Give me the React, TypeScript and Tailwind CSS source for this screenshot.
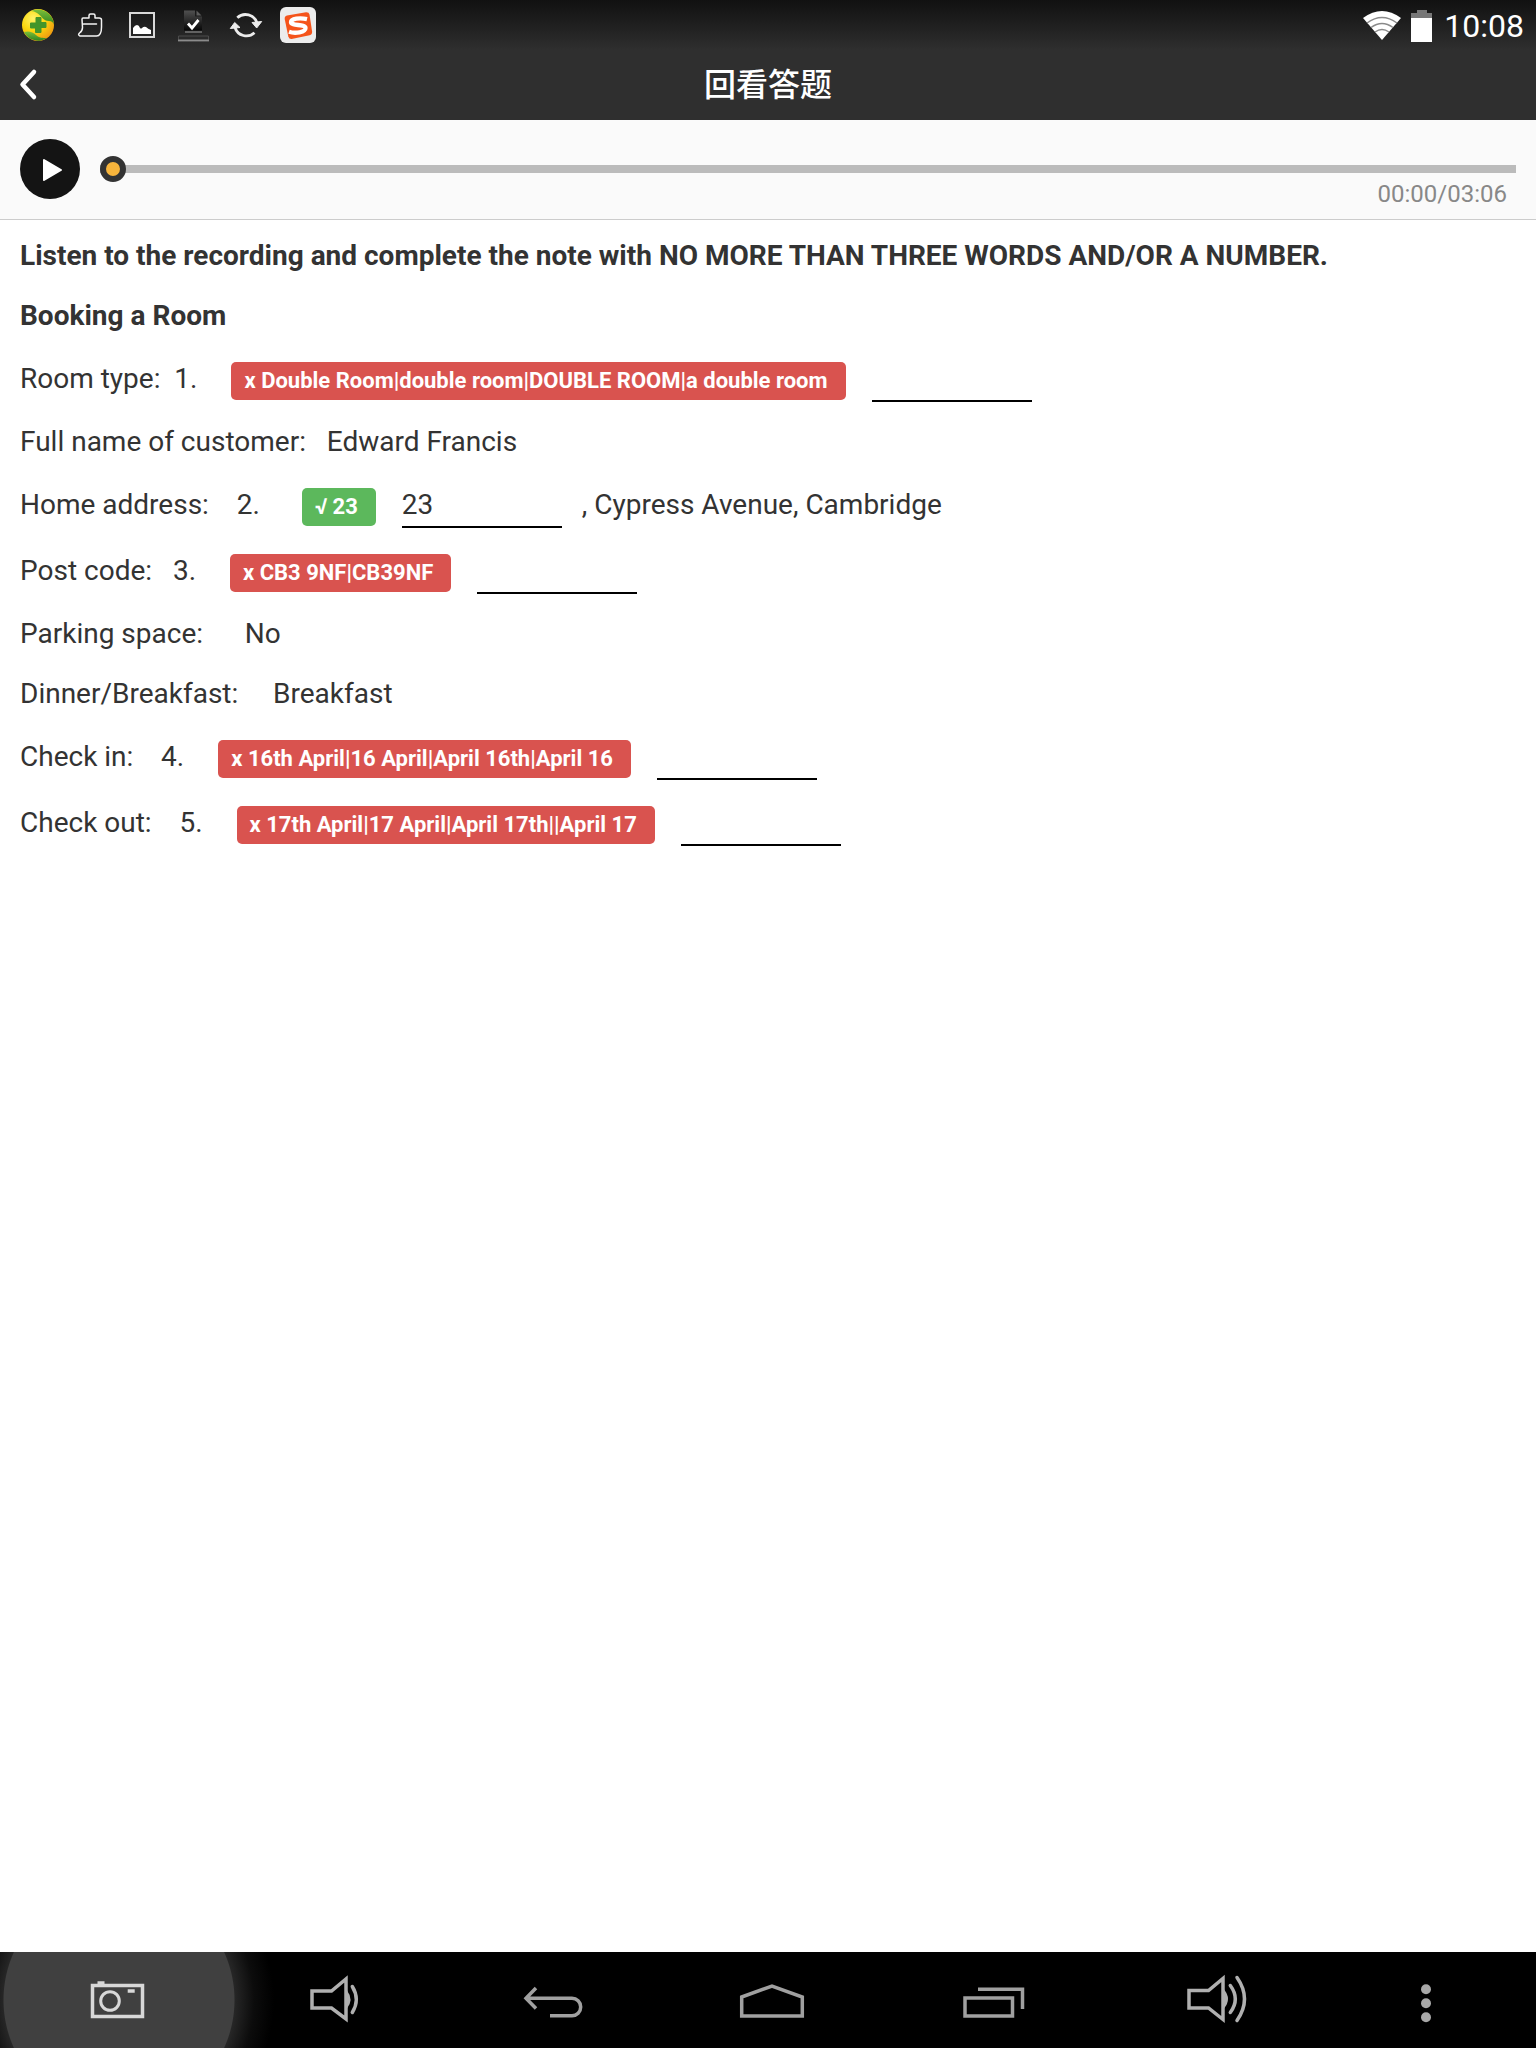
import React, { useState } from "react";

function StatusBar() {
  return (
    <div className="flex h-[50px] items-start justify-between bg-linear-to-b from-[#111111] to-[#2f2f2f] pl-[20px] pr-3">
      <div className="flex h-[50px] items-center gap-4">
        <svg className="size-9" viewBox="0 0 36 36">
          <defs>
            <radialGradient id="ball" cx="35%" cy="30%" r="75%">
              <stop offset="0" stopColor="#fff36a" />
              <stop offset="0.5" stopColor="#fbd80e" />
              <stop offset="1" stopColor="#f09a12" />
            </radialGradient>
            <linearGradient id="leaf" x1="0" y1="0" x2="0" y2="1">
              <stop offset="0" stopColor="#7cbf3a" />
              <stop offset="1" stopColor="#2f8420" />
            </linearGradient>
          </defs>
          <circle cx="18" cy="18" r="16" fill="url(#ball)" />
          <path d="M11 4A16 16 0 0 1 34 18q-1-4-5-4c-6 0-7-5-12-8q-3-2-6-2z" fill="url(#leaf)" />
          <path d="M4 25q7-2 12 3c3 3 7 3 11 3A16 16 0 0 1 4 25z" fill="url(#leaf)" />
          <path d="M16 10.500h5v5h5v5h-5v5h-5.500v-4.500h-5v-5h5.500z" fill="#43952a" stroke="#43952a" strokeLinejoin="round" />
        </svg>
        <svg className="size-9" viewBox="0 0 36 36" fill="none" stroke="#f4f4f4" strokeWidth="1.500" strokeLinejoin="round" strokeLinecap="round">
          <path d="M11 11h6V8.500q0-1.500 1.500-1.500h3q1.500 0 1.500 1.500V11h4q2.500 0 2.500 2v7q0 9-5 9H8q-2.500-1-.5-3 3-2 3-5.500l-.5-8q0-1.500 1-1.500zM11.500 17h13" />
        </svg>
        <svg className="size-9" viewBox="0 0 36 36">
          <rect x="6" y="6" width="24" height="24" fill="none" stroke="#d8d8d8" strokeWidth="2" />
          <path d="M9 27v-6q2-3 4-3t3 3q1 1 2 0 2-2 4-1 2 2 5 3v4z" fill="#fff" />
        </svg>
        <svg className="size-9" viewBox="0 0 36 36">
          <defs>
            <linearGradient id="sheet" x1="0" y1="0" x2="0" y2="1">
              <stop offset="0" stopColor="#505050" />
              <stop offset="1" stopColor="#060606" />
            </linearGradient>
          </defs>
          <path d="M8 3.500h11V9.500h7v14H8z" fill="url(#sheet)" />
          <path d="M20.500 3.500l5 5h-5z" fill="#5c5c5c" />
          <path d="M12 16.500l4 4.500 6.500-8" fill="none" stroke="#fff" strokeWidth="2.800" />
          <path d="M9 25h17" stroke="#777" strokeWidth="1.500" />
          <path d="M2.500 29h30v4h-30z" fill="#2a2a2a" stroke="#4b4b4b" strokeWidth="1" />
          <path d="M2 33.500h31" stroke="#8b8b8b" strokeWidth="1.800" />
        </svg>
        <svg className="size-9" viewBox="0 0 36 36" fill="none" stroke="#ececec" strokeWidth="2.800">
          <path d="M9.300 10.800A12 12 0 0 1 29 16" />
          <path d="M26.500 25.800A12 12 0 0 1 7 20.500" />
          <path d="M24 15.500l9.700-1-5 6.500z" fill="#ececec" strokeWidth="1" strokeLinejoin="round" />
          <path d="M2.300 21.500l9.700-1-5.300-5z" fill="#ececec" strokeWidth="1" strokeLinejoin="round" />
        </svg>
        <svg className="size-9" viewBox="0 0 36 36">
          <rect width="36" height="36" rx="6" fill="#ececec" />
          <path d="M7 8.500L26 5.200q3-.2 3.500 2.300l2.600 17q.3 3-2.500 3.800l-18 3.700q-2.500.2-3.300-2.500L4.700 12q-.3-2.800 2.300-3.500z" fill="#f5541b" />
          <path d="M27 12.200C20 10.500 11 11.500 11 15.200C11 19 25.500 17 25.500 21C25.500 25.500 15 26.800 9 24.800" fill="none" stroke="#fff" strokeWidth="4.300" />
        </svg>
      </div>
      <div className="flex h-[50px] items-center pt-0.5 text-[32px] leading-[48px] text-white">
        <svg className="mr-[9px] size-10" viewBox="0 0 40 40">
          <path d="M1 12Q20-2 39 12L20 34z" fill="#fff" />
          <g fill="none" stroke="#8a8a8a" strokeWidth="1.500">
            <path d="M5 17q15-11 30 0M9 21.500q11-8 22 0M13 26q7-5 14 0" />
          </g>
        </svg>
        <svg className="mr-[11px] h-8 w-[22px]" viewBox="0 0 22 32">
          <path d="M6 0h10v3h5v6H0V3h6z" fill="#777" />
          <path d="M0 8h21v24H0z" fill="#fff" />
        </svg>
        <time>10:08</time>
      </div>
    </div>
  );
}

function Player() {
  const [position, setPosition] = useState(0);
  return (
    <section className="flex h-[100px] items-start gap-5 border-b border-[#cccccc] bg-[#fafafa] px-5 pt-[19px]">
      <button aria-label="Play" className="size-[60px] shrink-0 rounded-full bg-[#141414]">
        <svg className="size-[60px]" viewBox="0 0 60 60">
          <path d="M24 21l17 10-17 10z" fill="#fff" stroke="#fff" strokeWidth="2" strokeLinejoin="round" />
        </svg>
      </button>
      <div className="flex flex-1 flex-col pt-[17px]">
        <input
          type="range"
          aria-label="Playback position"
          min={0}
          max={186}
          value={position}
          onChange={(e) => setPosition(Number(e.target.value))}
          className="block h-[26px] w-full appearance-none bg-transparent [&::-webkit-slider-runnable-track]:h-2 [&::-webkit-slider-runnable-track]:bg-[#bbbbbb] [&::-webkit-slider-thumb]:-mt-[9px] [&::-webkit-slider-thumb]:size-[26px] [&::-webkit-slider-thumb]:appearance-none [&::-webkit-slider-thumb]:rounded-full [&::-webkit-slider-thumb]:border-6 [&::-webkit-slider-thumb]:border-solid [&::-webkit-slider-thumb]:border-[#333333] [&::-webkit-slider-thumb]:bg-[#f8b53c]"
        />
        <span className="pr-[9px] text-right text-2xl leading-6 text-[#888888]">00:00/03:06</span>
      </div>
    </section>
  );
}

function Answer({ correct, children }: { correct?: boolean; children: React.ReactNode }) {
  return (
    <span
      className={
        "mt-1 flex h-[38px] items-center rounded-[5px] pl-[13px] pr-[18px] text-[22px] font-bold leading-none text-white " +
        (correct ? "ml-[42px] bg-[#5cb85c]" : "ml-[34px] bg-[#d9534f]")
      }
    >
      {children}
    </span>
  );
}

function Blank({ label, value }: { label: string; value?: string }) {
  return (
    <input
      type="text"
      aria-label={label}
      defaultValue={value}
      className="ml-[26px] h-[46px] w-40 border-b-2 border-black bg-transparent outline-none"
    />
  );
}

function Row({ children }: { children: React.ReactNode }) {
  return <div className="flex h-[46px] items-center whitespace-pre">{children}</div>;
}

function Exercise() {
  return (
    <main className="flex flex-1 flex-col gap-5 bg-white px-5 pt-4 text-[28px] leading-10 text-[#333333]">
      <p className="font-bold">
        Listen to the recording and complete the note with NO MORE THAN THREE WORDS AND/OR A NUMBER.
      </p>
      <h2 className="font-bold">Booking a Room</h2>
      <Row>
        <span>{"Room type:  1."}</span>
        <Answer>x Double Room|double room|DOUBLE ROOM|a double room</Answer>
        <Blank label="Room type" />
      </Row>
      <p className="whitespace-pre">{"Full name of customer:   Edward Francis"}</p>
      <Row>
        <span>{"Home address:    2."}</span>
        <Answer correct>√ 23</Answer>
        <Blank label="Home address" value="23" />
        <span className="ml-5">, Cypress Avenue, Cambridge</span>
      </Row>
      <Row>
        <span>{"Post code:   3."}</span>
        <Answer>x CB3 9NF|CB39NF</Answer>
        <Blank label="Post code" />
      </Row>
      <p className="whitespace-pre">{"Parking space:      No"}</p>
      <p className="whitespace-pre">{"Dinner/Breakfast:     Breakfast"}</p>
      <Row>
        <span>{"Check in:    4."}</span>
        <Answer>x 16th April|16 April|April 16th|April 16</Answer>
        <Blank label="Check in" />
      </Row>
      <Row>
        <span>{"Check out:    5."}</span>
        <Answer>x 17th April|17 April|April 17th||April 17</Answer>
        <Blank label="Check out" />
      </Row>
    </main>
  );
}

const navItems = [
  {
    label: "Screenshot",
    art: (
      <g stroke="#d8d8d8">
        <rect x="30.500" y="33.500" width="50" height="31" />
        <circle cx="48" cy="49" r="9.300" strokeWidth="3" />
        <path d="M35.500 31h7M65.700 39h7" />
      </g>
    ),
  },
  {
    label: "Volume down",
    art: (
      <g>
        <path d="M31 39h19.500L65 27v40L50.500 56H31z" />
        <path d="M66 38.500q7 9 0 18z" fill="#b0b0b0" stroke="none" />
        <path d="M71.300 34.500q8 13 0 26" strokeLinecap="round" />
      </g>
    ),
  },
  {
    label: "Back",
    art: <path d="M25 46.300h46a8.700 8.700 0 0 1 0 17.400H49M35 36l-10 10.300L35 56.500" stroke="#a0a0a0" />,
  },
  { label: "Home", art: <path d="M21.700 45L52 34l30.300 11v19H21.700z" stroke="#a0a0a0" /> },
  {
    label: "Recent apps",
    art: (
      <g stroke="#a0a0a0">
        <rect x="26" y="46" width="47.500" height="18" />
        <path d="M39 37.300h44.500V57" />
      </g>
    ),
  },
  {
    label: "Volume up",
    art: (
      <g>
        <path d="M30 38.500h19.500L64 26.500v41L49.500 56H30z" />
        <path d="M65 37.500q8 9.500 0 19z" fill="#b0b0b0" stroke="none" />
        <path d="M71.300 33.500q10 13.500 0 27M78 25.500q15 21.500 0 43" strokeLinecap="round" />
      </g>
    ),
  },
  {
    label: "More options",
    art: (
      <g fill="#a8a8a8" stroke="none">
        <circle cx="48" cy="37.300" r="5" />
        <circle cx="48" cy="51.300" r="5" />
        <circle cx="48" cy="65.300" r="5" />
      </g>
    ),
  },
];

function NavBar() {
  return (
    <nav className="grid h-24 grid-cols-7 bg-black bg-[radial-gradient(circle_at_119px_48px,#404040_0,#404040_115px,#262626_116px,#0c0c0c_135px,#000000_155px)]">
      {navItems.map((item) => (
        <button key={item.label} aria-label={item.label} className="flex items-center justify-center">
          <svg className="size-24" viewBox="0 0 96 96" fill="none" stroke="#b0b0b0" strokeWidth="3.500">
            {item.art}
          </svg>
        </button>
      ))}
    </nav>
  );
}

export default function App() {
  return (
    <div className="flex min-h-screen flex-col bg-white font-['Roboto','Noto_Sans_CJK_SC',sans-serif]">
      <header className="bg-[#2f2f2f]">
        <StatusBar />
        <div className="grid h-[70px] grid-cols-[1fr_auto_1fr] items-center">
          <button aria-label="Back" className="flex h-[70px] w-16 items-center">
            <svg className="ml-3 h-9 w-8" viewBox="0 0 32 36" fill="none" stroke="#fff" strokeWidth="4.500" strokeLinecap="round" strokeLinejoin="round">
              <path d="M22 5L10.500 17.500 22 30" />
            </svg>
          </button>
          <h1 className="text-[32px] leading-[70px] font-medium text-white">回看答题</h1>
        </div>
      </header>
      <Player />
      <Exercise />
      <NavBar />
    </div>
  );
}
